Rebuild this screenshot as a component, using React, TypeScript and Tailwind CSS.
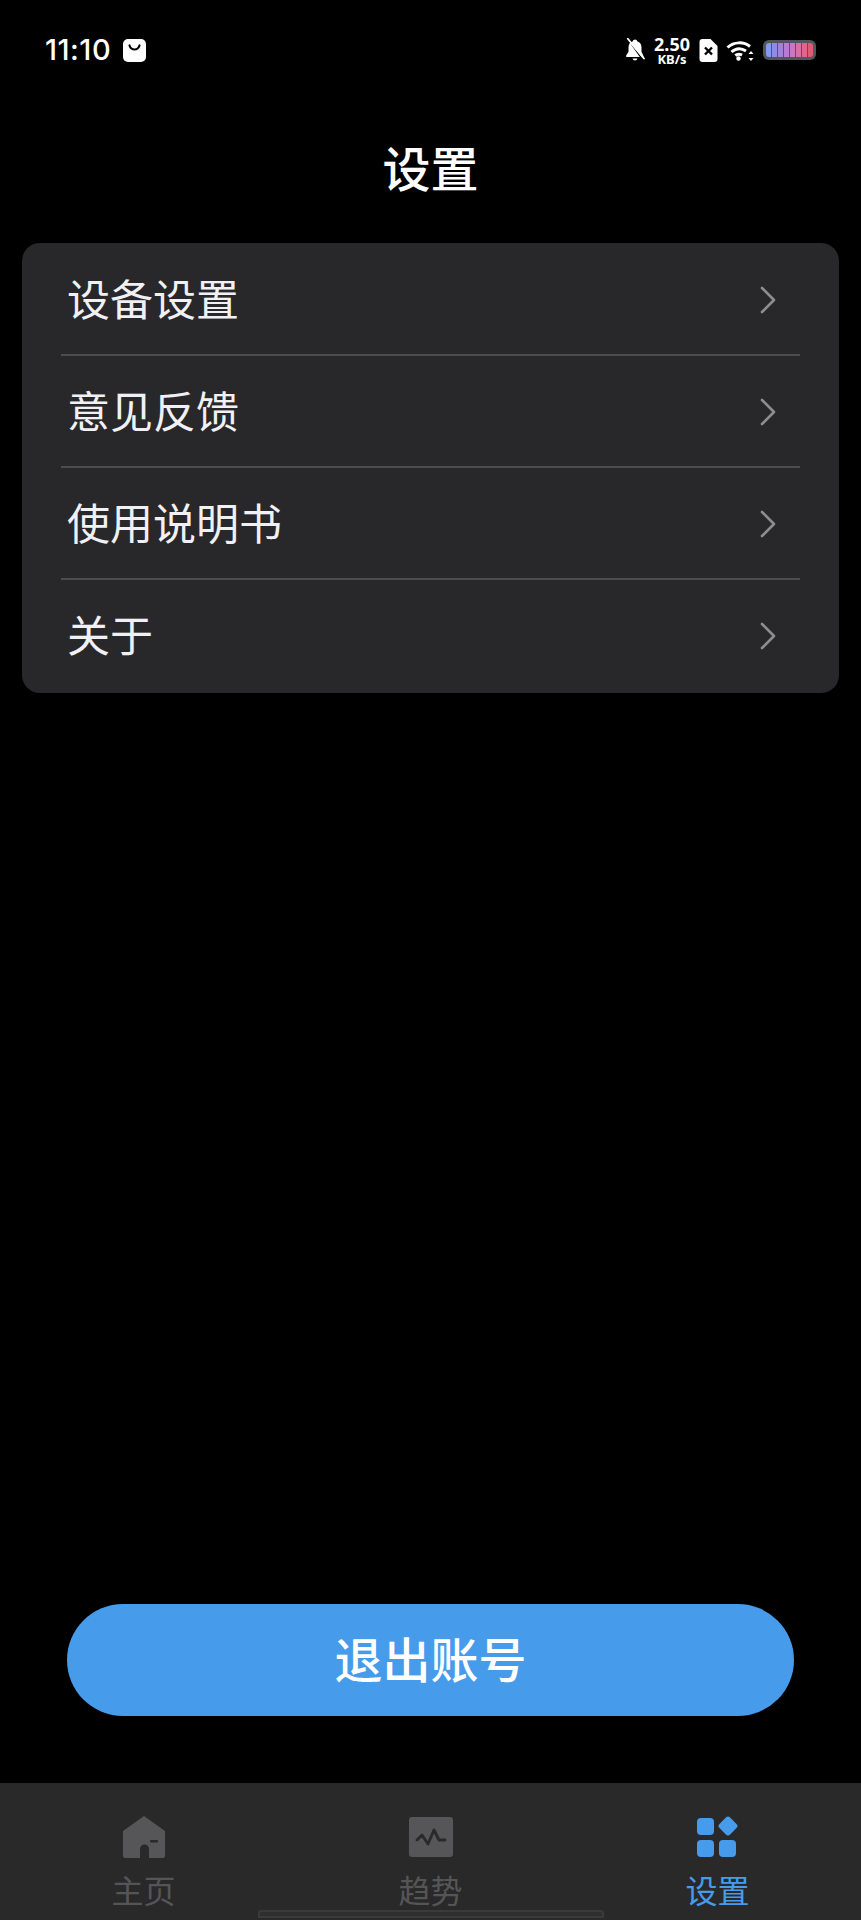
import React from 'react';

const FONT = "font-['Noto_Sans','Noto_Sans_CJK_SC',sans-serif]";

const MENU = ['设备设置', '意见反馈', '使用说明书', '关于'];

const CELLS = ['bg-[#7f9cf0]', 'bg-[#8f8be6]', 'bg-[#a47fdc]', 'bg-[#b87ad4]', 'bg-[#c977c4]', 'bg-[#d870a8]', 'bg-[#e0668c]', 'bg-[#e25a70]'];

const StatusBar: React.FC = () => (
  <div className="h-[100px] flex items-center justify-between pl-[45px] pr-[45px] text-white">
    <div className="flex items-center gap-[12px]">
      <span className="text-[29px] leading-[28px] font-medium font-['Inter',sans-serif] tracking-[0.5px]">11:10</span>
      <svg width="23" height="23" viewBox="0 0 23 23">
        <rect width="23" height="23" rx="5" fill="#fff" />
        <path d="M6.500 6.500c1 3 3 4 5 4s4-1 5-4" fill="none" stroke="#000" strokeWidth="2.200" strokeLinecap="round" />
      </svg>
    </div>
    <div className="flex items-center">
      <svg width="20" height="24" viewBox="0 0 20 24" className="mr-[9px]">
        <path d="M10 1.500c-1.200 0-2 .8-2.200 1.800C4.800 4.200 3.500 6.600 3.500 9.500v4.200L1.200 17.500v1.500h13.600L4.500 4.500 17 19.500h1.500v-1.500l-2-4.300V9.500c0-3-1.400-5.300-4.300-6.200C12 2.300 11.200 1.500 10 1.500z" fill="#fff" />
        <path d="M7.500 20.500h5c-.3 1.300-1.300 2-2.500 2s-2.200-.7-2.500-2z" fill="#fff" />
        <path d="M2.800.8 19 20.500" stroke="#fff" strokeWidth="1.800" strokeLinecap="round" />
      </svg>
      <div className="flex flex-col items-center mr-[9px] font-['Noto_Sans',sans-serif] font-bold">
        <span className="text-[18px] leading-[18px]">2.50</span>
        <span className="text-[13px] leading-[13px]">KB/s</span>
      </div>
      <svg width="19" height="23" viewBox="0 0 18 23" className="mr-[8px]">
        <path d="M3 0h8l7 7v13a3 3 0 0 1-3 3H3a3 3 0 0 1-3-3V3a3 3 0 0 1 3-3z" fill="#fff" />
        <path d="M5.500 8.500l7 7M12.500 8.500l-7 7" stroke="#000" strokeWidth="2.400" />
      </svg>
      <svg width="29" height="21" viewBox="0 0 28 21" className="mr-[8px]">
        <g fill="none" stroke="#fff" strokeWidth="3">
          <path d="M1 7.500c6.500-6 16-6 22.500-1" />
          <path d="M5 12c4.500-4 10-4 14.500-1" />
          <path d="M8.800 15.500c2-1.600 4.500-1.600 6.800-.5" />
        </g>
        <circle cx="12" cy="18.500" r="2.200" fill="#fff" />
        <path d="M24.500 11l2.500 3h-5zM24.500 21l2.500-3h-5z" fill="#fff" />
      </svg>
      <div className="w-[53px] h-[20px] rounded-[6px] bg-[#55555f] p-[3px]">
        <div className="w-full h-full rounded-[3px] overflow-hidden flex gap-[1px]">
          {CELLS.map(cell => (
            <div key={cell} className={`flex-1 ${cell}`} />
          ))}
        </div>
      </div>
    </div>
  </div>
);

const MenuCard: React.FC = () => (
  <div className="mx-[22px] rounded-[18px] bg-[#28282a] pb-[2px]">
    {MENU.map((label, i) => (
      <div key={label} className="h-[112px] mx-[39px] pt-[2px] relative flex items-center justify-between">
        <span className="pl-[6px] text-[43px] leading-[56px] text-[#f1f1f5]">{label}</span>
        <svg width="16" height="28" viewBox="0 0 16 28" className="mr-[24px]">
          <path d="M2 2l12 12L2 26" fill="none" stroke="#8e8e90" strokeWidth="2.600" strokeLinecap="round" strokeLinejoin="round" />
        </svg>
        {i < MENU.length - 1 && <div className="absolute left-0 right-0 bottom-[-1px] h-[2px] bg-[#4c4c4e]" />}
      </div>
    ))}
  </div>
);

const TabBar: React.FC = () => (
  <div className="h-[137px] bg-[#292929] grid grid-cols-3 pt-[33px]">
    <div className="flex flex-col items-center">
      <svg width="42" height="42" viewBox="0 0 42 42">
        <path d="M21 0 42 15v25a2 2 0 0 1-2 2H2a2 2 0 0 1-2-2V15z" fill="#565658" />
        <path d="M17 42V33a4.500 4.500 0 0 1 9 0v9z" fill="#292929" />
        <rect x="27" y="24" width="8" height="2.500" rx="1" fill="#292929" />
      </svg>
      <span className="mt-[15px] text-[32px] leading-[36px] text-[#555557]">主页</span>
    </div>
    <div className="flex flex-col items-center">
      <svg width="44" height="42" viewBox="0 0 44 42">
        <rect width="44" height="40" y="1" rx="3" fill="#565658" />
        <path d="M8 24l5-5 6 9 6-14 5 10h6" fill="none" stroke="#292929" strokeWidth="2.800" strokeLinejoin="round" strokeLinecap="round" />
      </svg>
      <span className="mt-[15px] text-[32px] leading-[36px] text-[#555557]">趋势</span>
    </div>
    <div className="flex flex-col items-center">
      <svg width="42" height="42" viewBox="0 0 42 42">
        <rect x="0" y="2" width="17" height="17" rx="4" fill="#469bea" />
        <rect x="23.500" y="2.500" width="15" height="15" rx="3" fill="#469bea" transform="rotate(45 31 10)" />
        <rect x="0" y="24" width="17" height="17" rx="4" fill="#469bea" />
        <rect x="22" y="24" width="17" height="17" rx="4" fill="#469bea" />
      </svg>
      <span className="mt-[15px] text-[32px] leading-[36px] text-[#469bea]">设置</span>
    </div>
  </div>
);

const App: React.FC = () => (
  <div className={`relative w-[861px] h-[1920px] flex flex-col bg-black ${FONT}`}>
    <StatusBar />
    <h1 className="h-[143px] pt-[37px] text-center text-[48px] leading-[64px] font-medium text-white">设置</h1>
    <MenuCard />
    <div className="flex-1 flex flex-col justify-end px-[67px] pb-[67px]">
      <button className="h-[112px] w-full rounded-full bg-[#469bea] text-white text-[48px] font-medium">退出账号</button>
    </div>
    <TabBar />
    <div className="absolute left-[258px] bottom-[2px] w-[346px] h-[8px] rounded-t-[3px] border-2 border-[#3a3a3a] bg-[#2e2e2e]" />
  </div>
);

export default App;
